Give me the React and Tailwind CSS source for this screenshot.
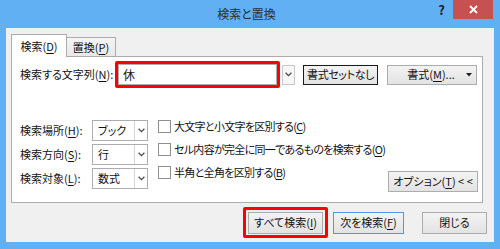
import React from "react";

const U = ({ children }) => <span className="underline underline-offset-2">{children}</span>;

const Chevron = () => (
  <svg width="7" height="5" viewBox="0 0 7 5">
    <path d="M0.6 0.8 L3.5 3.7 L6.4 0.8" fill="none" stroke="#4a4a4a" strokeWidth="1.3" />
  </svg>
);

const btn =
  "flex items-center justify-center border bg-linear-to-b from-[#f3f3f3] to-[#e3e3e3] text-[11px] whitespace-nowrap";

const Select = ({ value }) => (
  <div className="flex h-[21px] w-[56px] border border-[#abadb3] bg-white">
    <div className="flex flex-1 items-center pl-[5px] text-[11px]">{value}</div>
    <div className="flex w-[13px] items-center justify-center border-l border-[#d5d5d5]">
      <Chevron />
    </div>
  </div>
);

const Check = ({ children }) => (
  <div className="flex h-[13px] items-center">
    <div className="h-[13px] w-[13px] border border-[#8e8f8f] bg-white" />
    <span className="ml-[3px] whitespace-nowrap text-[11px] tracking-[-0.7px]">{children}</span>
  </div>
);

const App = () => {
  return (
    <div className="flex h-[249px] w-[500px] flex-col bg-[#62b0f4] font-['Noto_Sans_CJK_JP',sans-serif] text-[#111] [font-feature-settings:'palt']">
      {/* タイトルバー */}
      <div className="flex h-[28px]">
        <div className="flex-1" />
        <div className="pt-[5px] text-[12px] text-[#2d2d2d]">検索と置換</div>
        <div className="flex flex-1 items-start justify-end pr-[7px]">
          <span className="mr-[8px] mt-[2px] text-[13px] font-bold leading-[16px] text-[#222]">?</span>
          <div className="flex h-[19px] w-[40px] items-center justify-center bg-[#c75050]">
            <svg width="9" height="9" viewBox="0 0 9 9">
              <path d="M1 1 L8 8 M8 1 L1 8" stroke="#fff" strokeWidth="1.8" />
            </svg>
          </div>
        </div>
      </div>

      {/* 本体 */}
      <div className="mx-[6px] flex h-[214px] flex-col bg-[#f0f0f0] pt-[6px]">
        {/* タブ */}
        <div className="ml-[5px] flex h-[22px] items-end">
          <div className="relative z-10 -mb-px flex h-[23px] w-[56px] items-center justify-center border border-b-0 border-[#acacac] bg-white text-[11px]">
            <span>
              検索(<U>D</U>)
            </span>
          </div>
          <div className="flex h-[19px] w-[49px] items-center justify-center border border-l-0 border-b-0 border-[#acacac] bg-linear-to-b from-[#f5f5f5] to-[#e8e8e8] text-[11px]">
            <span>
              置換(<U>P</U>)
            </span>
          </div>
        </div>

        {/* パネル */}
        <div className="ml-[5px] mr-[11px] flex h-[147px] flex-col border border-[#acacac] bg-white pl-[8px] pt-[4px]">
          <div className="flex h-[27px] items-center">
            <div className="w-[95px] whitespace-nowrap text-[11px]">
              検索する文字列(<U>N</U>):
            </div>
            <div className="h-[27px] w-[165px] rounded-[2px] border-[3px] border-[#ff0000]">
              <div className="flex h-full items-center border border-[#abadb3] bg-white pl-[4px] text-[12px]">
                休
              </div>
            </div>
            <div className="ml-[2px] flex h-[20px] w-[13px] items-center justify-center border border-[#c8c8c8] bg-[#f7f7f7]">
              <Chevron />
            </div>
            <div className={`${btn} ml-[8px] h-[20px] w-[75px] border-[#1a1a1a]`}>
              <span className="tracking-[-0.4px]">書式セットなし</span>
            </div>
            <div className={`${btn} ml-[9px] h-[20px] w-[90px] border-[#acacac]`}>
              <span className="flex flex-1 justify-center pl-[8px]">
                <span>
                  書式(<U>M</U>)...
                </span>
              </span>
              <svg className="mr-[4px]" width="6" height="4" viewBox="0 0 6 4">
                <path d="M0 0 H6 L3 3.5 Z" fill="#222" />
              </svg>
            </div>
          </div>

          <div className="mt-[32px] flex items-start">
            <div className="flex flex-col gap-[3px]">
              <div className="flex items-center">
                <div className="w-[72px] whitespace-nowrap text-[11px]">
                  検索場所(<U>H</U>):
                </div>
                <Select value="ブック" />
              </div>
              <div className="flex items-center">
                <div className="w-[72px] whitespace-nowrap text-[11px]">
                  検索方向(<U>S</U>):
                </div>
                <Select value="行" />
              </div>
              <div className="flex items-center">
                <div className="w-[72px] whitespace-nowrap text-[11px]">
                  検索対象(<U>L</U>):
                </div>
                <Select value="数式" />
              </div>
            </div>

            <div className="ml-[10px] flex flex-col gap-[10px]">
              <Check>
                大文字と小文字を区別する(<U>C</U>)
              </Check>
              <Check>
                セル内容が完全に同一であるものを検索する(<U>O</U>)
              </Check>
              <Check>
                半角と全角を区別する(<U>B</U>)
              </Check>
            </div>

            <div className={`${btn} ml-auto mr-[4px] mt-[51px] h-[21px] w-[90px] border-[#acacac]`}>
              <span>
                オプション(<U>T</U>) &lt; &lt;
              </span>
            </div>
          </div>
        </div>

        {/* 下部ボタン */}
        <div className="mt-[4px] flex items-center justify-end pr-[7px]">
          <div className="flex h-[31px] items-center rounded-[2px] border-[3px] border-[#ff0000] px-[2px]">
            <div className={`${btn} h-[22px] w-[75px] border-[#acacac]`}>
              <span>
                すべて検索(<U>I</U>)
              </span>
            </div>
          </div>
          <div className={`${btn} ml-[5px] h-[22px] w-[71px] border-[#4a9be0]`}>
            <span>
              次を検索(<U>F</U>)
            </span>
          </div>
          <div className={`${btn} ml-[18px] h-[22px] w-[65px] border-[#acacac]`}>
            <span>閉じる</span>
          </div>
        </div>
      </div>
    </div>
  );
};

export default App;
